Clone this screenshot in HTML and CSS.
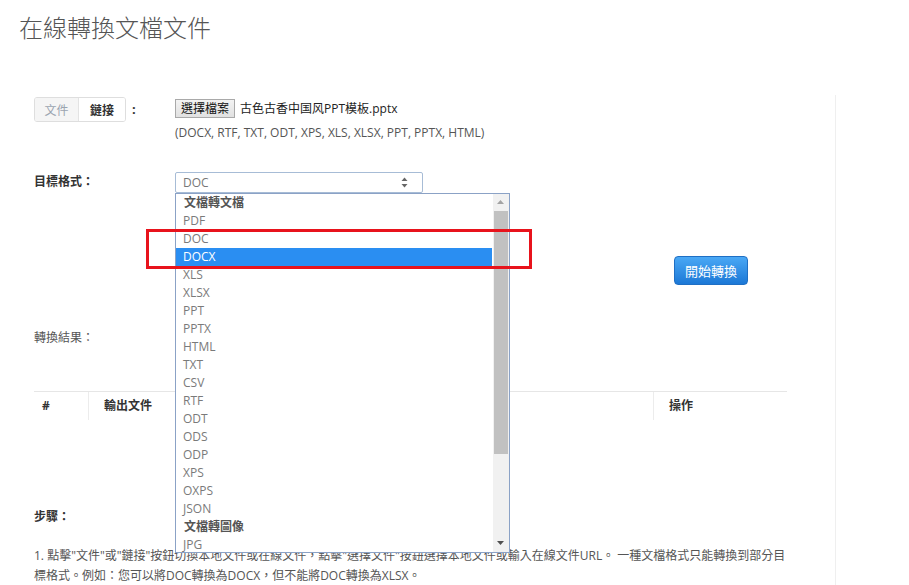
FILE: index.html
```html
<!DOCTYPE html>
<html lang="zh-Hant">
<head>
<meta charset="utf-8">
<title>在線轉換文檔文件</title>
<link rel="stylesheet" href="styles.css">
</head>
<body>
<h1 class="title">在線轉換文檔文件</h1>
<div class="layout">
  <div class="main">
    <div class="form-row row-file">
      <div class="label-cell">
        <div class="tabs">
          <span class="tab tab-active">文件</span>
          <span class="tab">鏈接</span>
        </div>
        <span class="colon">:</span>
      </div>
      <div class="field-cell">
        <div class="file-line">
          <span class="file-btn">選擇檔案</span>
          <span class="file-name">古色古香中国风PPT模板.pptx</span>
        </div>
        <div class="formats">(DOCX, RTF, TXT, ODT, XPS, XLS, XLSX, PPT, PPTX, HTML)</div>
      </div>
    </div>

    <div class="form-row row-target">
      <div class="label-cell"><span class="bold-label">目標格式：</span></div>
      <div class="field-cell">
        <div class="select-wrap">
          <div class="select">
            <span class="select-value">DOC</span>
            <svg class="select-arrows" width="7" height="11" viewBox="0 0 7 11"><path d="M3.5 0.5 L6.5 4 L0.5 4 Z" fill="#666"/><path d="M0.5 7 L6.5 7 L3.5 10.5 Z" fill="#666"/></svg>
          </div>
          <div class="listbox">
            <div class="options">
              <div class="group">文檔轉文檔</div>
              <div class="opt">PDF</div>
              <div class="opt">DOC</div>
              <div class="opt opt-selected">DOCX</div>
              <div class="opt">XLS</div>
              <div class="opt">XLSX</div>
              <div class="opt">PPT</div>
              <div class="opt">PPTX</div>
              <div class="opt">HTML</div>
              <div class="opt">TXT</div>
              <div class="opt">CSV</div>
              <div class="opt">RTF</div>
              <div class="opt">ODT</div>
              <div class="opt">ODS</div>
              <div class="opt">ODP</div>
              <div class="opt">XPS</div>
              <div class="opt">OXPS</div>
              <div class="opt">JSON</div>
              <div class="group">文檔轉圖像</div>
              <div class="opt">JPG</div>
            </div>
            <div class="scrollbar">
              <svg class="sb-arrow" width="15" height="17" viewBox="0 0 15 17"><path d="M4 10 L11 10 L7.5 6 Z" fill="#a3a3a3"/></svg>
              <div class="sb-track"><div class="sb-thumb"></div></div>
              <svg class="sb-arrow" width="15" height="17" viewBox="0 0 15 17"><path d="M4 6 L11 6 L7.5 10 Z" fill="#505050"/></svg>
            </div>
          </div>
          <div class="red-box"></div>
        </div>
      </div>
    </div>

    <div class="btn-row">
      <span class="btn-start">開始轉換</span>
    </div>

    <div class="result-label">轉換結果：</div>

    <div class="table">
      <div class="th th-num">#</div>
      <div class="th th-file">輸出文件</div>
      <div class="th th-op">操作</div>
    </div>

    <div class="steps-label">步驟：</div>
    <p class="steps-text">1. 點擊"文件"或"鏈接"按鈕切換本地文件或在線文件，點擊"選擇文件"按鈕選擇本地文件或輸入在線文件URL。 一種文檔格式只能轉換到部分目標格式。例如：您可以將DOC轉換為DOCX，但不能將DOC轉換為XLSX。</p>
  </div>
</div>
</body>
</html>
```
FILE: styles.css
```css
html, body {
  margin: 0;
  padding: 0;
  background: #fff;
}
body {
  font-family: "Open Sans", "Noto Sans CJK TC", sans-serif;
  font-size: 12px;
  color: #555;
  overflow: hidden;
  height: 585px;
}
.title {
  margin: 0;
  padding: 12px 0 0 19px;
  font-size: 24px;
  line-height: 32px;
  font-weight: 300;
  color: #555;
}
.layout {
  display: flex;
  margin-top: 51px;
}
.main {
  width: 836px;
  box-sizing: border-box;
  padding: 2px 48px 0 34px;
  border-right: 1px solid #efefef;
  min-height: 500px;
}
.form-row {
  display: grid;
  grid-template-columns: 141px 1fr;
}
.label-cell {
  display: flex;
  align-items: flex-start;
}
.tabs {
  display: inline-flex;
  height: 25px;
  box-sizing: border-box;
  border: 1px solid #dedede;
  border-radius: 3px;
  overflow: hidden;
}
.tab {
  display: flex;
  align-items: center;
  justify-content: center;
  font-size: 12px;
  color: #333;
  font-weight: 600;
  width: 46px;
  background: #fff;
}
.tab-active {
  width: 43px;
  background: #f5f5f5;
  color: #9aa4b0;
  font-weight: 400;
  border-right: 1px solid #e3e3e3;
}
.colon {
  margin-left: 6px;
  line-height: 25px;
  font-weight: 700;
  color: #333;
  font-size: 13px;
}
.file-line {
  display: flex;
  align-items: center;
  height: 20px;
  margin-top: 1px;
}
.file-btn {
  display: inline-flex;
  align-items: center;
  height: 19px;
  box-sizing: border-box;
  padding: 0 5px;
  border: 1px solid #a9a9a9;
  background: linear-gradient(#f3f3f3, #e1e1e1);
  color: #111;
  font-size: 12px;
}
.file-name {
  margin-left: 5px;
  color: #222;
  font-size: 12px;
}
.formats {
  margin-top: 6px;
  line-height: 18px;
  font-size: 12px;
  color: #555;
}
.row-target {
  margin-top: 30px;
}
.bold-label {
  font-weight: 700;
  color: #333;
  font-size: 12px;
  line-height: 18px;
  padding-top: 1px;
}
.select-wrap {
  position: relative;
  width: 248px;
}
.select {
  height: 21px;
  box-sizing: border-box;
  border: 1px solid #a7bcd6;
  border-radius: 2px;
  display: flex;
  align-items: center;
  justify-content: space-between;
  padding: 0 14px 0 7px;
  background: #fff;
}
.select-value {
  color: #777;
  font-size: 12px;
}
.listbox {
  position: absolute;
  top: 21px;
  left: 0;
  width: 335px;
  height: 360px;
  box-sizing: border-box;
  border: 1px solid #8ba2c6;
  background: #fff;
  display: flex;
  z-index: 5;
}
.options {
  flex: 1;
  height: 358px;
  overflow: hidden;
}
.group, .opt {
  height: 18px;
  line-height: 18px;
  font-size: 12px;
  padding-left: 7px;
  white-space: nowrap;
}
.group {
  font-weight: 700;
  color: #555;
  padding-left: 8px;
}
.opt {
  color: #7a7a7a;
}
.opt-selected {
  background: #2a8ef2;
  color: #fff;
}
.scrollbar {
  width: 16px;
  background: #f1f1f1;
  display: flex;
  flex-direction: column;
  border-left: 1px solid #fff;
}
.sb-arrow {
  display: block;
  flex: none;
}
.sb-track {
  flex: 1;
  padding: 0 1px;
}
.sb-thumb {
  height: 243px;
  background: #c1c1c1;
}
.red-box {
  position: absolute;
  left: -29px;
  top: 57px;
  width: 386px;
  height: 40px;
  box-sizing: border-box;
  border: 3px solid #e8131c;
  z-index: 6;
  pointer-events: none;
}
.btn-row {
  margin-top: 63px;
  padding-left: 640px;
  height: 29px;
}
.btn-start {
  display: inline-flex;
  align-items: center;
  justify-content: center;
  width: 74px;
  height: 29px;
  box-sizing: border-box;
  border: 1px solid #1f6fc4;
  border-radius: 4px;
  background: linear-gradient(#4aa8f5, #1c78d6);
  color: #fff;
  font-size: 13px;
}
.result-label {
  margin-top: 44px;
  line-height: 18px;
  font-size: 12px;
  color: #555;
}
.table {
  margin-top: 44px;
  border-top: 1px solid #e6e6e6;
  display: grid;
  grid-template-columns: 54px 565px 1fr;
  height: 28px;
}
.th {
  font-weight: 700;
  color: #333;
  font-size: 12px;
  line-height: 28px;
  padding-left: 8px;
  position: relative;
}
.th-file, .th-op {
  padding-left: 15px;
  border-left: 1px solid #ececec;
}
.steps-label {
  margin-top: 88px;
  font-weight: 700;
  color: #333;
  font-size: 12px;
  line-height: 18px;
}
.steps-text {
  margin: 20px 0 0 0;
  font-size: 12px;
  line-height: 20px;
  color: #555;
}
```
